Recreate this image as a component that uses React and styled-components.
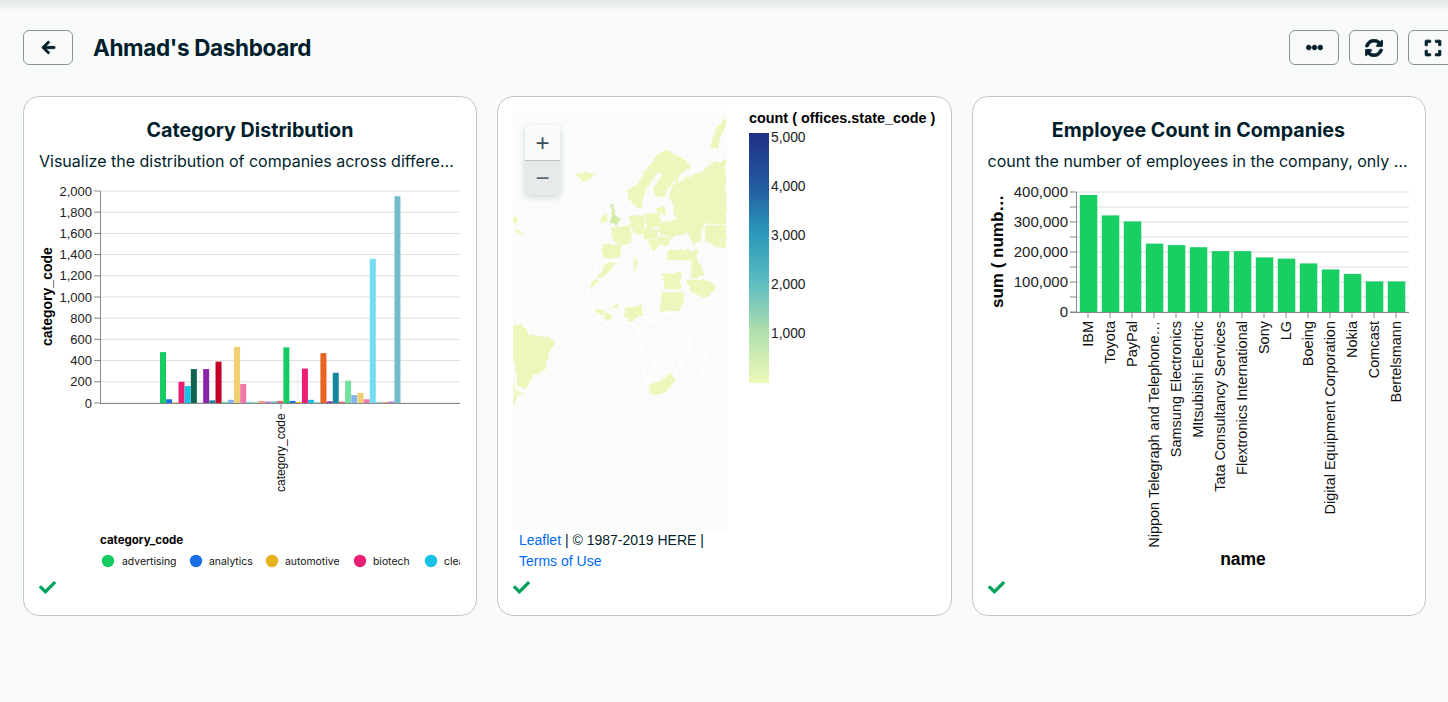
import React from "react";
import styled, { createGlobalStyle } from "styled-components";
import { FaArrowLeft, FaCheck, FaEllipsisH, FaExpand, FaSyncAlt } from "react-icons/fa";

const GlobalStyle = createGlobalStyle`
  html, body {
    margin: 0;
    height: 100%;
    overflow: hidden;
    background: #f9fbfa;
    color: #001e2b;
    font-family: Inter, "Noto Sans", sans-serif;
  }
`;

const SANS = '"Liberation Sans", Arial, sans-serif';

const Page = styled.div`
  width: 1448px;
  height: 702px;
  overflow: hidden;
`;

const TopShade = styled.div`
  height: 12px;
  background: linear-gradient(#e4e7e7, #f9fbfa);
`;

const Header = styled.header`
  width: 1435px;
  height: 35px;
  margin: 18px 0 31px 23px;
  display: flex;
  align-items: center;
  justify-content: space-between;
`;

const HeaderGroup = styled.div`
  display: flex;
  align-items: center;
  gap: 10px;
`;

const Heading = styled.h1`
  margin: 0 0 0 10px;
  font-size: 22.5px;
  font-weight: 700;
  letter-spacing: -0.35px;
`;

const IconButton = styled.button`
  width: ${props => props.$width || 50}px;
  height: 35px;
  padding: 0;
  display: flex;
  align-items: center;
  justify-content: center;
  background: transparent;
  border: 1px solid #889397;
  border-radius: 6px;
  color: #001e2b;
  font-size: ${props => props.$size || 16}px;
  svg {
    stroke: currentColor;
    stroke-width: 24px;
  }
`;

const Board = styled.div`
  margin-left: 23px;
  width: 1403px;
  display: grid;
  grid-template-columns: 454px 454.5px 454px;
  column-gap: 20px;
`;

const Card = styled.section`
  box-sizing: border-box;
  height: 520px;
  padding: ${props => (props.$map ? "14px" : "21px")} 15px 0;
  display: flex;
  flex-direction: column;
  background: #fff;
  border: 1px solid #c1c7c6;
  border-radius: 16px;
`;

const CardTitle = styled.h2`
  margin: 0;
  height: 24px;
  line-height: 24px;
  text-align: center;
  font-size: 19.7px;
  font-weight: 700;
`;

const CardText = styled.p`
  margin: 9px 0 0;
  height: 20px;
  line-height: 20px;
  font-size: 16px;
  white-space: nowrap;
  overflow: hidden;
  text-overflow: ellipsis;
`;

const Plot = styled.svg`
  display: block;
  flex: none;
  margin-top: 5px;
  font-family: ${SANS};
`;

const LegendSvg = styled(Plot)`
  margin-top: 0;
`;

const CardFooter = styled.footer`
  margin-top: auto;
  height: 36px;
  color: #00a35c;
  font-size: 17px;
`;

const MapRow = styled.div`
  display: grid;
  grid-template-columns: 214px 1fr;
  column-gap: 22px;
`;

const MapColumn = styled.div`
  width: 214px;
`;

const MapFrame = styled.div`
  position: relative;
  height: 419px;
  background: #fafcfb;
`;

const ZoomControl = styled.div`
  position: absolute;
  top: 14px;
  left: 12px;
  width: 35px;
  display: flex;
  flex-direction: column;
  border-radius: 5px;
  overflow: hidden;
  box-shadow: 0 2px 6px rgba(0, 30, 43, 0.18);
`;

const ZoomButton = styled.div`
  height: 35px;
  display: flex;
  align-items: center;
  justify-content: center;
  background: ${props => (props.$muted ? "#e7eaea" : "#f9fbfa")};
  border-top: ${props => (props.$muted ? "1px solid #b8c4c2" : "0")};
  box-sizing: border-box;
  color: ${props => (props.$muted ? "#5c6c75" : "#3d4f58")};
  font: 400 24px ${SANS};
`;

const MapSvg = styled.svg`
  display: block;
  width: 214px;
  height: 419px;
`;

const Attribution = styled.div`
  padding: 0 6px;
  font: 14px/21px ${SANS};
  color: #001e2b;
  a {
    color: #016bf8;
    text-decoration: none;
  }
`;

const categories = [
  [480, "#16cc62"], [35, "#196ee6"], [5, "#e6b31d"], [200, "#ea1e72"], [160, "#18c2e6"],
  [320, "#0f6350"], [3, "#d9d9d9"], [320, "#8a24a8"], [25, "#14879e"], [390, "#c40028"],
  [12, "#73e09e"], [30, "#85b4f0"], [530, "#f0d070"], [180, "#f078a8"], [12, "#76dcf4"],
  [10, "#9fd8c8"], [20, "#f0a080"], [15, "#c080d8"], [15, "#74bccc"], [20, "#e06070"],
  [525, "#16cc62"], [20, "#196ee6"], [10, "#e6b31d"], [325, "#ea1e72"], [30, "#18c2e6"],
  [10, "#9fd8c8"], [470, "#e86420"], [15, "#8a24a8"], [285, "#14879e"], [12, "#e06070"],
  [210, "#73e09e"], [75, "#85b4f0"], [95, "#f0d070"], [35, "#f078a8"], [1360, "#76dcf4"],
  [12, "#9fd8c8"], [10, "#f0a080"], [15, "#c080d8"], [1950, "#74bccc"]
];

const legendItems = [
  ["advertising", "#16cc62", 108, 122],
  ["analytics", "#196ee6", 196, 209],
  ["automotive", "#e6b31d", 272, 285],
  ["biotech", "#ea1e72", 360, 373],
  ["clean", "#18c2e6", 431, 444]
];

const CategoryChart = () => {
  const ticks = [0, 200, 400, 600, 800, 1000, 1200, 1400, 1600, 1800, 2000];
  const y = v => 403 - v * 0.106;
  return (
    <Plot width="421" height="396" viewBox="39 176 421 396">
      {ticks.map(t => (
        <g key={t}>
          <line x1="100" x2="460" y1={y(t)} y2={y(t)} stroke="#ddd" />
          <line x1="94" x2="100" y1={y(t)} y2={y(t)} stroke="#888" />
          <text x="92" y={y(t) + 4.5} textAnchor="end" fontSize="13" fill="#222">
            {t.toLocaleString("en-US")}
          </text>
        </g>
      ))}
      {categories.map(([v, color], i) => (
        <rect key={i} x={160 + i * 6.17} y={y(v)} width="6" height={v * 0.106} fill={color} />
      ))}
      <line x1="100.5" x2="100.5" y1="191" y2="403" stroke="#888" />
      <line x1="100" x2="460" y1="403.5" y2="403.5" stroke="#888" />
      <line x1="281" x2="281" y1="403" y2="409" stroke="#888" />
      <text transform="translate(285 492) rotate(-90)" fontSize="12" fill="#111">category_code</text>
      <text transform="translate(52 346) rotate(-90)" fontSize="14" fontWeight="700" fill="#000">
        category_code
      </text>
      <text x="100" y="544" fontSize="11.5" fontWeight="700" fontFamily="Inter" fill="#000">category_code</text>
      {legendItems.map(([label, color, cx, tx]) => (
        <g key={label}>
          <circle cx={cx} cy="561" r="6.2" fill={color} />
          <text x={tx} y="565" fontSize="10.4" fontFamily="Inter" fill="#111">{label}</text>
        </g>
      ))}
    </Plot>
  );
};

// land outlines traced from the map, in 3x crop coordinates of two map tiles
const northLand = [
  "213,222 240,215 268,218 262,235 240,245 225,235",
  "615,140 625,110 635,85 650,65 662,50 662,80 645,110 640,145",
  "370,270 400,250 420,215 445,180 470,155 490,148 510,165 550,185 560,205 530,215 520,240 505,240 490,265 480,290 455,290 445,265 465,235 470,220 450,225 430,260 415,285 410,325 395,320 370,295",
  "662,178 620,190 590,215 560,225 530,240 500,255 492,290 505,310 505,330 515,365 545,395 565,435 590,425 590,385 600,370 630,372 662,372",
  "600,376 662,376 662,420 640,415 640,440 600,425",
  "640,418 662,418 662,440 640,440",
  "290,345 305,343 303,365 290,365",
  "452,320 485,322 482,345 456,345",
  "372,350 416,343 420,385 408,407 385,398 376,380",
  "418,343 464,338 470,378 428,388",
  "318,385 350,378 374,373 380,428 345,437 320,417",
  "463,375 490,363 522,363 548,395 522,408 495,412 463,402",
  "416,388 462,388 454,414 416,417",
  "456,408 497,413 492,434 460,434",
  "428,418 456,418 462,447 440,452",
  "293,432 354,435 342,477 290,472",
  "270,540 290,510 305,490 330,485 325,505 295,530",
  "385,478 398,478 395,510 388,515",
  "483,450 577,450 577,482 490,480",
  "560,482 577,477 600,530 560,535",
  "470,520 530,515 530,540 475,540",
  "24,350 42,355 38,372 24,370",
  "28,385 50,392 55,402 38,400"
];

const southLand = [
  "255,30 280,0 265,0",
  "475,0 525,0 530,28 478,28",
  "540,0 610,0 635,25 600,55 560,35",
  "470,40 540,35 525,90 465,98",
  "360,85 410,75 415,105 375,125 358,110",
  "318,85 335,70 348,85",
  "298,100 312,98 322,108 312,122 298,118",
  "265,88 295,90 295,108 275,100",
  "430,315 470,300 500,275 510,305 480,340 440,345",
  "24,140 50,130 70,165 130,170 150,185 130,225 120,270 85,285 60,330 35,315 35,270 24,240",
  "30,330 50,335 50,345 35,348",
  "24,295 32,345 34,370 24,372"
];

const southCoast = [
  "M250 30L255 70L270 100L305 130L370 125L395 140L410 175L405 240L430 310",
  "M530 100L560 130L600 95L640 20",
  "M560 130L550 220L510 280",
  "M300 70L400 80L470 100L530 100",
  "M420 125L500 125L550 150",
  "M405 240L500 240L510 280",
  "M490 125L500 210L550 220",
  "M450 240L455 300",
  "M580 230L605 215L590 285",
  "M24 110L50 125L70 160"
];

const northCoast = [
  "M190 130L220 90L240 40",
  "M290 430L270 530",
  "M400 430L420 470L480 500",
  "M415 415L470 440L480 450"
];

const WorldMap = () => (
  <MapFrame>
    <MapSvg viewBox="513 111 214 419">
      <defs>
        <filter id="rough" x="-5%" y="-5%" width="110%" height="110%">
          <feTurbulence type="fractalNoise" baseFrequency="0.2" numOctaves="2" seed="4" />
          <feDisplacementMap in="SourceGraphic" scale="5" xChannelSelector="R" yChannelSelector="G" />
        </filter>
      </defs>
      <g filter="url(#rough)">
        <g transform="translate(505 100) scale(0.3333)">
          {northCoast.map(d => (
            <path key={d} d={d} fill="none" stroke="#fff" strokeWidth="4" />
          ))}
          {northLand.map(p => (
            <polygon key={p} points={p} fill="#edf7bb" />
          ))}
          <polygon points="312,315 325,312 328,340 348,360 335,375 315,365 322,340" fill="#d4eaa9" />
        </g>
        <g transform="translate(505 280) scale(0.3333)">
          {southCoast.map(d => (
            <path key={d} d={d} fill="none" stroke="#fff" strokeWidth="4" />
          ))}
          {southLand.map(p => (
            <polygon key={p} points={p} fill="#edf7bb" />
          ))}
        </g>
      </g>
    </MapSvg>
    <ZoomControl>
      <ZoomButton>+</ZoomButton>
      <ZoomButton $muted>−</ZoomButton>
    </ZoomControl>
  </MapFrame>
);

const LegendPlot = () => (
  <LegendSvg width="190" height="280" viewBox="749 111 190 280">
    <defs>
      <linearGradient id="ylgnbu" x1="0" y1="0" x2="0" y2="1">
        <stop offset="0" stopColor="#1f2f85" />
        <stop offset="0.2" stopColor="#23579f" />
        <stop offset="0.4" stopColor="#2a98ba" />
        <stop offset="0.6" stopColor="#5cbcc0" />
        <stop offset="0.8" stopColor="#b2e0ae" />
        <stop offset="1" stopColor="#edf8b9" />
      </linearGradient>
    </defs>
    <text x="749" y="123" fontSize="14.4" fontWeight="700" fill="#000">count ( offices.state_code )</text>
    <rect x="749" y="133" width="20" height="250" fill="url(#ylgnbu)" />
    {[[5000, 142], [4000, 191], [3000, 240], [2000, 289], [1000, 338]].map(([v, yy]) => (
      <text key={v} x="771" y={yy} fontSize="13.8" fill="#222">{v.toLocaleString("en-US")}</text>
    ))}
  </LegendSvg>
);

const companies = [
  ["IBM", 390], ["Toyota", 322], ["PayPal", 302], ["Nippon Telegraph and Telephone…", 228],
  ["Samsung Electronics", 223], ["MItsubishi Electric", 216], ["Tata Consultancy Services", 203],
  ["Flextronics International", 203], ["Sony", 182], ["LG", 178], ["Boeing", 162],
  ["Digital Equipment Corporation", 142], ["Nokia", 127], ["Comcast", 102], ["Bertelsmann", 102]
];

const EmployeeChart = () => {
  const y = k => 312 - k * 0.3;
  const grid = [0, 50, 100, 150, 200, 250, 300, 350, 400];
  return (
    <Plot width="422" height="396" viewBox="988 176 422 396">
      {grid.map(k => (
        <g key={k}>
          <line x1="1076" x2="1409" y1={y(k)} y2={y(k)} stroke="#ddd" />
          <line x1="1070" x2="1076" y1={y(k)} y2={y(k)} stroke="#888" />
          {k % 100 === 0 && (
            <text x="1068" y={y(k) + 5} textAnchor="end" fontSize="15" fill="#222">
              {(k * 1000).toLocaleString("en-US")}
            </text>
          )}
        </g>
      ))}
      {companies.map(([name, k], i) => {
        const cx = 1088 + i * 22;
        return (
          <g key={name}>
            <rect x={cx - 8.2} y={y(k)} width="17.5" height={k * 0.3} fill="#19cf64" />
            <line x1={cx} x2={cx} y1="312" y2="318" stroke="#888" />
            <text transform={`translate(${cx + 5} 321) rotate(-90)`} textAnchor="end" fontSize="14.5" fill="#111">
              {name}
            </text>
          </g>
        );
      })}
      <line x1="1076.5" x2="1076.5" y1="192" y2="312" stroke="#888" />
      <line x1="1070" x2="1409" y1="312.5" y2="312.5" stroke="#888" />
      <text transform="translate(1003 308) rotate(-90)" fontSize="17" fontWeight="700" fill="#000">
        sum ( numb…
      </text>
      <text x="1243" y="565" textAnchor="middle" fontSize="17.5" fontWeight="700" fill="#000">name</text>
    </Plot>
  );
};

const App = () => (
  <Page>
    <GlobalStyle />
    <TopShade />
    <Header>
      <HeaderGroup>
        <IconButton aria-label="Back" $size={15}><FaArrowLeft /></IconButton>
        <Heading>Ahmad's Dashboard</Heading>
      </HeaderGroup>
      <HeaderGroup>
        <IconButton aria-label="More" $size={17}><FaEllipsisH /></IconButton>
        <IconButton aria-label="Refresh" $width={49} $size={18}><FaSyncAlt /></IconButton>
        <IconButton aria-label="Full screen" $size={18}><FaExpand /></IconButton>
      </HeaderGroup>
    </Header>
    <Board>
      <Card>
        <CardTitle>Category Distribution</CardTitle>
        <CardText>Visualize the distribution of companies across different categories</CardText>
        <CategoryChart />
        <CardFooter><FaCheck /></CardFooter>
      </Card>
      <Card $map>
        <MapRow>
          <MapColumn>
            <WorldMap />
            <Attribution>
              <a href="#leaflet">Leaflet</a> | © 1987-2019 HERE | <a href="#terms">Terms of Use</a>
            </Attribution>
          </MapColumn>
          <LegendPlot />
        </MapRow>
        <CardFooter><FaCheck /></CardFooter>
      </Card>
      <Card>
        <CardTitle>Employee Count in Companies</CardTitle>
        <CardText>count the number of employees in the company, only showing the top companies</CardText>
        <EmployeeChart />
        <CardFooter><FaCheck /></CardFooter>
      </Card>
    </Board>
  </Page>
);

export default App;
